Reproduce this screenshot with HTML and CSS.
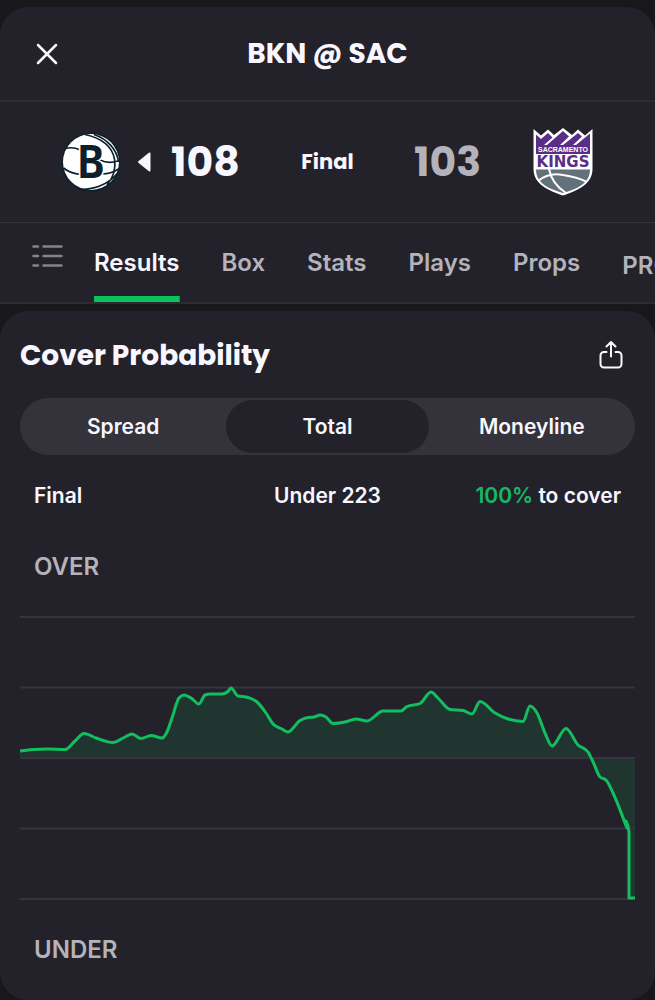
FILE: index.html
```html
<!DOCTYPE html>
<html lang="en">
<head>
<meta charset="utf-8">
<meta name="viewport" content="width=device-width, initial-scale=1">
<title>BKN @ SAC</title>
<link rel="stylesheet" href="styles.css">
</head>
<body>
<header class="game">
  <div class="titlebar">
    <button class="icon-button" type="button" aria-label="Close">
      <svg width="22" height="22" viewBox="0 0 22 22" fill="none" stroke="currentColor" stroke-width="2.5" stroke-linecap="round"><path d="M2 2l18 18M20 2L2 20"/></svg>
    </button>
    <h1 class="title">BKN @ SAC</h1>
  </div>

  <div class="scoreboard">
    <div class="team">
      <svg width="60" height="60" viewBox="0 0 60 60" role="img" aria-label="Brooklyn">
        <circle cx="30" cy="30" r="29.5" fill="#0b202b"/>
        <circle cx="30" cy="30" r="28" fill="#fff"/>
        <g fill="none" stroke="#0b202b" stroke-width="1.7">
          <path d="M4.500 16.500q7-2 15 1.500M2.500 36q7 5.500 17 6.500M39 28q8 4 18 1M41 42q9 0 16.500-5"/>
          <path d="M24 2.500C40 6 51 14 53.500 27 55 37 52 46 46 53M33 2.500C46 7 56 17 57.500 30M20 57.500C36 57 49 51 57.500 40"/>
        </g>
        <text class="logo-b" x="30" y="46" text-anchor="middle">B</text>
      </svg>
      <svg width="16" height="22" viewBox="0 0 16 22" aria-hidden="true"><path d="M1 11L11.500 2.500v17z" fill="#f8f7ff" stroke="#f8f7ff" stroke-width="2" stroke-linejoin="round"/></svg>
      <span class="score">108</span>
    </div>
    <span class="status">Final</span>
    <div class="team team-away">
      <span class="score score-lost">103</span>
      <svg width="62" height="70" viewBox="0 0 62 70" role="img" aria-label="Sacramento Kings">
        <path d="M1.500 2L9 8.500 16 2.500l6 5.500 9-7 9 7 6-5.500 7 6L60.500 2v40C60.500 58 44 64 31 68.500 18 64 1.500 58 1.500 42z" fill="#fff"/>
        <path d="M4 7.500l5 4.500 7-6 4.500 4.500L12 18H4zM15 18l16-14 6 5.500-9 8.500zM31 18L46 6l4 3.500-9 8.500zM44 18l14-11.500V18z" fill="#5a2d86"/>
        <path d="M4 18h54v9H4z" fill="#5a2d86"/>
        <path d="M4 42.500h54C58 57 44 62 31 66 18 62 4 57 4 42.500z" fill="#63717b"/>
        <g fill="none" stroke="#fff" stroke-width="2"><path d="M17 42q3 15 17 24M6 54q11-9 25-6 14 2 24 7"/></g>
        <text class="logo-city" x="31" y="25" text-anchor="middle">SACRAMENTO</text>
        <text class="logo-kings" x="31" y="40" text-anchor="middle">KINGS</text>
      </svg>
    </div>
  </div>

  <nav class="tabs" aria-label="Game sections">
    <button class="icon-button menu-button" type="button" aria-label="All sections">
      <svg width="31" height="24" viewBox="0 0 31 24" fill="none" stroke="currentColor" stroke-width="2.500" stroke-linecap="round"><path d="M1.500 2.500h4.500M11.500 2.500h18M1.500 12h4.500M11.500 12h18M1.500 21.500h4.500M11.500 21.500h18"/></svg>
    </button>
    <button class="tab tab-active" type="button" aria-current="page">Results</button>
    <button class="tab" type="button">Box</button>
    <button class="tab" type="button">Stats</button>
    <button class="tab" type="button">Plays</button>
    <button class="tab" type="button">Props</button>
    <button class="tab tab-pro" type="button">PRO</button>
  </nav>
</header>

<main class="card">
  <div class="card-head">
    <h2 class="card-title">Cover Probability</h2>
    <button class="icon-button" type="button" aria-label="Share">
      <svg width="24" height="30" viewBox="0 0 24 30" fill="none" stroke="currentColor" stroke-width="2" stroke-linecap="round" stroke-linejoin="round"><path d="M7.500 11H5a3.500 3.500 0 0 0-3.500 3.500V23A3.500 3.500 0 0 0 5 26.500h14a3.500 3.500 0 0 0 3.500-3.500v-8.500A3.500 3.500 0 0 0 19 11h-2.500M12 15.500V1M7.500 5.500L12 1l4.500 4.500"/></svg>
    </button>
  </div>

  <div class="segments">
    <button class="segment" type="button" aria-pressed="false">Spread</button>
    <button class="segment segment-active" type="button" aria-pressed="true">Total</button>
    <button class="segment" type="button" aria-pressed="false">Moneyline</button>
  </div>

  <div class="summary">
    <span>Final</span>
    <span>Under 223</span>
    <span class="summary-end"><span class="positive">100%</span> to cover</span>
  </div>

  <p class="axis-label">OVER</p>
  <svg class="chart" viewBox="0 0 615 284" role="img" aria-label="Probability of the total going over or under">
    <path class="area" id="area"/>
    <path class="grid" d="M0 1h615M0 71.500h615M0 142h615M0 212.500h615M0 283h615"/>
    <path class="line" id="line"/>
  </svg>
  <p class="axis-label">UNDER</p>
</main>
<script src="chart.js"></script>
</body>
</html>
```
FILE: styles.css
```css
* {
  box-sizing: border-box;
}

body {
  margin: 0;
  padding-top: 7px;
  background: #18171b;
  color: #f8f7ff;
  font-family: Inter, "Liberation Sans", sans-serif;
  font-weight: 600;
  font-size: 21px;
  line-height: 24px;
}

button {
  margin: 0;
  padding: 0;
  border: 0;
  background: none;
  color: inherit;
  font: inherit;
  cursor: pointer;
}

h1, h2, p {
  margin: 0;
}

svg {
  display: block;
  flex: none;
}

.title, .card-title, .score, .status {
  font-family: Poppins, Inter, sans-serif;
  font-weight: 700;
}

.game {
  overflow: hidden;
  border-radius: 28px 28px 0 0;
  background: #23222b;
}

.titlebar {
  display: grid;
  grid-template-columns: 1fr auto 1fr;
  align-items: center;
  padding: 28px 36px 27px;
  border-bottom: 2px solid #2c2b34;
}

.icon-button {
  justify-self: start;
}

.title {
  font-size: 28px;
  line-height: 38px;
}

.scoreboard {
  display: grid;
  grid-template-columns: 1fr auto 1fr;
  align-items: center;
  padding: 25px 61px;
}

.team {
  display: flex;
  align-items: center;
  gap: 17px;
}

.team-away {
  justify-content: flex-end;
  gap: 51px;
}

.score {
  font-size: 41px;
  line-height: 44px;
}

.score-lost {
  color: #b4b3bb;
}

.logo-b {
  fill: #0b202b;
  stroke: #fff;
  stroke-width: 3px;
  paint-order: stroke;
  font: 700 44px "DejaVu Sans Mono", monospace;
}

.logo-city {
  fill: #fff;
  font: 700 7px "Liberation Sans", sans-serif;
}

.logo-kings {
  fill: #5a2d86;
  font: 700 15px "DejaVu Sans", sans-serif;
}

.tabs {
  display: flex;
  gap: 42px;
  padding-left: 32px;
  border-top: 1px solid #35343d;
  border-bottom: 2px solid #2c2b34;
}

.menu-button {
  align-self: flex-start;
  margin-right: -11px;
  padding-top: 21px;
  color: #85848d;
}

.tab {
  flex: none;
  padding: 27px 0 20px;
  border-bottom: 6px solid transparent;
  color: #b4b3bb;
  font-size: 24px;
  line-height: 26px;
}

.tab-active {
  color: #f8f7ff;
  background: linear-gradient(#0ac25a, #0ac25a) bottom / 100% 6px no-repeat border-box;
}

.tab-pro {
  padding: 30px 0 17px;
}

.card {
  margin-top: 7px;
  padding: 25px 20px 36px;
  border-radius: 28px;
  background: #23222b;
}

.card-head {
  display: flex;
  align-items: center;
  justify-content: space-between;
  padding-right: 12px;
}

.card-title {
  font-size: 28px;
  line-height: 40px;
}

.segments {
  display: grid;
  grid-template-columns: repeat(3, 1fr);
  gap: 2px;
  margin-top: 22px;
  padding: 2px;
  border-radius: 29px;
  background: #34333b;
}

.segment {
  padding: 15px 0 14px;
  border-radius: 27px;
}

.segment-active {
  background: #23222b;
}

.summary {
  display: grid;
  grid-template-columns: 1fr auto 1fr;
  margin-top: 29px;
  padding: 0 14px;
}

.summary-end {
  text-align: right;
}

.positive {
  color: #18b866;
}

.axis-label {
  padding-left: 14px;
  color: #b4b3bb;
  font-size: 24px;
  line-height: 28px;
}

.summary + .axis-label {
  margin-top: 45px;
}

.chart {
  width: 100%;
  height: auto;
  margin: 35px 0 36px;
}

.grid {
  fill: none;
  stroke: #35343d;
  stroke-width: 2;
}

.area {
  fill: #203530;
}

.line {
  fill: none;
  stroke: #12be5f;
  stroke-width: 3;
  stroke-linejoin: round;
}
```
FILE: chart.js
```js
// Samples of the cover probability; y = 142 is the 50% line.
const samples = [
  [0, 135], [14, 133.5], [27, 133], [45, 133.5], [55, 125], [64, 117.5], [76, 122], [93, 126.5],
  [105, 121], [112, 118], [121, 122.5], [131, 119.5], [142, 122], [147, 116], [152, 102], [159, 82],
  [164, 79], [171, 82], [179, 88], [185, 79], [190, 78], [202, 78], [208, 75.5], [211, 72],
  [218, 80], [226, 81], [237, 86], [246, 97], [253, 108], [262, 113], [268, 116], [280, 104.5],
  [288, 101.5], [294, 101], [300, 99], [306, 101], [313, 107.5], [325, 106], [336, 103], [347, 105],
  [363, 95], [381, 95], [387, 90.5], [400, 87.5], [411, 76], [418, 82], [430, 93.5], [443, 94.5],
  [452, 98], [460, 85.5], [475, 97], [488, 103], [503, 105.5], [510, 90], [517, 97], [525, 117],
  [532, 130], [546, 112.5], [558, 129], [568, 136], [574, 148], [580, 161], [586, 164], [593, 177],
  [607, 212]
];
const finish = " L606 205 L608 210 L609 216 L609 282 L615 282";

function slope(i) {
  const p = samples[i - 1], q = samples[i], r = samples[i + 1];
  if (!p) return (r[1] - q[1]) / (r[0] - q[0]);
  if (!r) return (q[1] - p[1]) / (q[0] - p[0]);
  const h0 = q[0] - p[0], h1 = r[0] - q[0];
  const s0 = (q[1] - p[1]) / h0, s1 = (r[1] - q[1]) / h1;
  if (s0 * s1 <= 0) return 0;
  const mean = (s0 * h1 + s1 * h0) / (h0 + h1);
  return Math.sign(mean) * Math.min(Math.abs(mean), 2 * Math.abs(s0), 2 * Math.abs(s1));
}

let d = "M" + samples[0].join(" ");
for (let i = 1; i < samples.length; i++) {
  const [x0, y0] = samples[i - 1], [x1, y1] = samples[i];
  const h = (x1 - x0) / 3;
  d += ` C${x0 + h} ${y0 + slope(i - 1) * h} ${x1 - h} ${y1 - slope(i) * h} ${x1} ${y1}`;
}
d += finish;

document.getElementById("line").setAttribute("d", d);
document.getElementById("area").setAttribute("d", d + " V142 H0 Z");
```
